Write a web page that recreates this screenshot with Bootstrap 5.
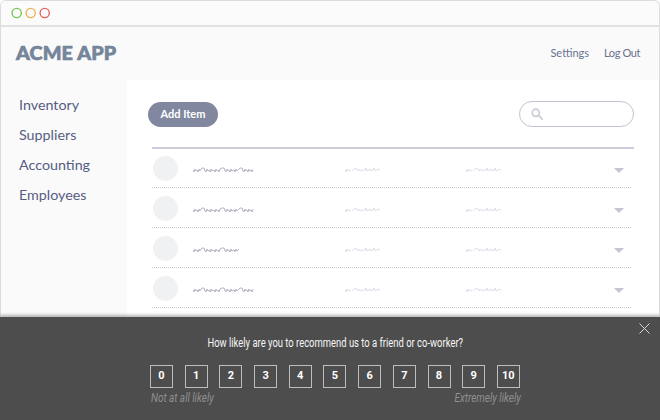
<!DOCTYPE html>
<html lang="en">
<head>
<meta charset="utf-8">
<title>ACME APP</title>
<link href="https://cdn.jsdelivr.net/npm/bootstrap@5.3.0/dist/css/bootstrap.min.css" rel="stylesheet">
<style>
html,body{margin:0;height:420px;overflow:hidden;background:#fff;}
body{position:relative;font-family:"Lato","Liberation Sans",sans-serif;}
.win{width:660px;height:420px;border:1px solid #dcdcdc;border-bottom:0;border-radius:6px 6px 0 0;background:#fafafa;overflow:hidden;}
.titlebar{border-bottom:2px solid #e2e2e2;background:#fbfbfb;padding:6px 0 0 10px;box-sizing:content-box;height:18px;}
.apphead{height:54px;padding:0 19px 0 15px;}
.brand-t{font-weight:900;font-size:19.8px;line-height:1;color:#75859a;letter-spacing:.1px;-webkit-text-stroke:.7px #75859a;}
.toplink{font-size:11px;color:#6a7190;text-decoration:none;}
.toplink-b{letter-spacing:-.4px;}
.toplinks{gap:15px;}
.side{width:126px;padding:15px 0 0 18px;gap:10px;}
.side a{font-size:14.3px;line-height:20px;color:#565d84;text-decoration:none;}
.pane{flex:1;background:#fff;height:340px;padding:21px 25px 0 21px;}
.addbtn{width:70px;height:25px;border-radius:13px;background:#80879f;color:#fff;font-size:11px;font-weight:700;border:0;padding:0;}
.searchbox{width:115px;height:26px;border:1px solid #c4c3d6;border-radius:13px;padding-left:11px;}
.headrule{height:2px;background:#cdcddc;margin:20px 0 -1px 4px;}
.rowi{height:40px;margin-left:4px;margin-right:3px;border-bottom:1px dotted #c8c8c8;padding-left:1px;}
.ava{width:25px;height:25px;border-radius:50%;background:#f0f1f3;margin-top:1px;}
.sq1{margin-left:15px;width:152px;margin-top:6px;}
.sq2{width:121px;margin-top:6px;}
.sq3{width:148px;margin-top:6px;}
.tri{width:0;height:0;border-left:5.5px solid transparent;border-right:5.5px solid transparent;border-top:5.5px solid #c4c5d6;margin-top:5px;}
.nps{position:absolute;left:0;top:317px;width:660px;height:103px;background:#4d4d4d;box-shadow:0 -2px 3px rgba(90,90,90,.45);color:#fff;font-family:"Roboto",sans-serif;}
.q{font-size:12.5px;line-height:14px;padding:19px 0 0 10px;text-align:center;color:#f5f5f5;}
.q span{display:inline-block;transform:scaleX(.755);white-space:nowrap;}
.closex{position:absolute;left:639px;top:6px;}
.scale{width:370px;margin:15px 0 0 150px;}
.numb{width:23px;height:23px;border:1px solid #bdbdbd;font-weight:700;font-size:11px;color:#fff;}
.ends{width:370px;margin:3px 0 0 151px;font-style:italic;font-size:12px;color:#8f8f8f;line-height:14px;}
.ends span{display:inline-block;white-space:nowrap;transform:scaleX(.83);transform-origin:0 50%;}
.ends span+span{transform-origin:100% 50%;}
</style>
</head>
<body>
<svg width="0" height="0" class="d-block" aria-hidden="true">
<defs>
<path id="w1" d="M0 3l1 2 1-3 1 2 1-1 1 2 1-3 1 2 2-3 2 0 1 3 1 1 1-3 1 2 1-1 1 2 1-3 1 2 2-1 1 2 1-3 1 2 1-1 1 2 1-3 2-1 2 0 1 3 1 1 1-3 1 2 1-1 1 2 1-3 1 2 2-1 1 2 1-3 1 2 1-1 2-2 2 0 1 3 1 1 1-3 1 2 1-1 1 2 1-3 1 2 1-1 1 2 1-3"/>
<path id="w2" d="M0 3l1 2 1-3 1 2 1-1 2 1M7 4l1-1 1-1 2-1 1 2 1 1 1-2 2 2 2-1 2 0 1-2 1 3 2-1 1-1 1 2 2-1 1-2 1 3 2-1 1-1 2 1"/>
</defs>
</svg>
<div class="win d-flex flex-column">
  <div class="titlebar d-flex align-items-start">
    <svg class="d-block" width="40" height="12" fill="none" stroke-width="1.35"><circle cx="5.7" cy="6" r="4.6" stroke="#75c653"/><circle cx="19.7" cy="6" r="4.6" stroke="#eab04a"/><circle cx="33.7" cy="6" r="4.6" stroke="#e45f5b"/></svg>
  </div>
  <div class="apphead d-flex align-items-center justify-content-between">
    <div class="brand-t">ACME APP</div>
    <div class="toplinks d-flex"><a class="toplink" href="#">Settings</a><a class="toplink toplink-b" href="#">Log Out</a></div>
  </div>
  <div class="d-flex">
    <nav class="side d-flex flex-column">
      <a href="#">Inventory</a><a href="#">Suppliers</a><a href="#">Accounting</a><a href="#">Employees</a>
    </nav>
    <main class="pane">
      <div class="d-flex justify-content-between align-items-center">
        <button class="addbtn" type="button">Add Item</button>
        <div class="searchbox d-flex align-items-center">
          <svg width="12" height="12" viewBox="0 0 12 12" fill="none" stroke="#c9cad8" stroke-width="1.7"><circle cx="4.8" cy="4.8" r="3.6"/><path d="M7.5 7.5l3.7 3.7" stroke-linecap="round"/></svg>
        </div>
      </div>
      <div class="headrule"></div>
      <div class="rowi d-flex align-items-center">
        <div class="ava"></div>
        <div class="sq1"><svg class="d-block" width="60" height="7" fill="none" stroke="#b4b5c8"><use href="#w1"/></svg></div>
        <div class="sq2"><svg class="d-block" width="38" height="7" fill="none" stroke="#dcdde6"><use href="#w2"/></svg></div>
        <div class="sq3"><svg class="d-block" width="38" height="7" fill="none" stroke="#dcdde6"><use href="#w2"/></svg></div>
        <div class="tri"></div>
      </div>
      <div class="rowi d-flex align-items-center">
        <div class="ava"></div>
        <div class="sq1"><svg class="d-block" width="67" height="7" fill="none" stroke="#b4b5c8"><use href="#w1"/></svg></div>
        <div class="sq2"><svg class="d-block" width="38" height="7" fill="none" stroke="#dcdde6"><use href="#w2"/></svg></div>
        <div class="sq3"><svg class="d-block" width="38" height="7" fill="none" stroke="#dcdde6"><use href="#w2"/></svg></div>
        <div class="tri"></div>
      </div>
      <div class="rowi d-flex align-items-center">
        <div class="ava"></div>
        <div class="sq1"><svg class="d-block" width="46" height="7" fill="none" stroke="#b4b5c8"><use href="#w1"/></svg></div>
        <div class="sq2"><svg class="d-block" width="38" height="7" fill="none" stroke="#dcdde6"><use href="#w2"/></svg></div>
        <div class="sq3"><svg class="d-block" width="38" height="7" fill="none" stroke="#dcdde6"><use href="#w2"/></svg></div>
        <div class="tri"></div>
      </div>
      <div class="rowi d-flex align-items-center">
        <div class="ava"></div>
        <div class="sq1"><svg class="d-block" width="66" height="7" fill="none" stroke="#b4b5c8"><use href="#w1"/></svg></div>
        <div class="sq2"><svg class="d-block" width="38" height="7" fill="none" stroke="#dcdde6"><use href="#w2"/></svg></div>
        <div class="sq3"><svg class="d-block" width="38" height="7" fill="none" stroke="#dcdde6"><use href="#w2"/></svg></div>
        <div class="tri"></div>
      </div>
    </main>
  </div>
</div>
<section class="nps">
  <svg class="closex" width="11" height="11" viewBox="0 0 11 11" stroke="#d8d8d8" fill="none"><path d="M.5.5l10 10M10.5.5l-10 10"/></svg>
  <div class="q"><span>How likely are you to recommend us to a friend or co-worker?</span></div>
  <div class="scale d-flex justify-content-between">
    <div class="numb d-flex align-items-center justify-content-center">0</div>
    <div class="numb d-flex align-items-center justify-content-center">1</div>
    <div class="numb d-flex align-items-center justify-content-center">2</div>
    <div class="numb d-flex align-items-center justify-content-center">3</div>
    <div class="numb d-flex align-items-center justify-content-center">4</div>
    <div class="numb d-flex align-items-center justify-content-center">5</div>
    <div class="numb d-flex align-items-center justify-content-center">6</div>
    <div class="numb d-flex align-items-center justify-content-center">7</div>
    <div class="numb d-flex align-items-center justify-content-center">8</div>
    <div class="numb d-flex align-items-center justify-content-center">9</div>
    <div class="numb d-flex align-items-center justify-content-center">10</div>
  </div>
  <div class="ends d-flex justify-content-between"><span>Not at all likely</span><span>Extremely likely</span></div>
</section>
<script src="https://cdn.jsdelivr.net/npm/bootstrap@5.3.0/dist/js/bootstrap.bundle.min.js"></script>
</body>
</html>
